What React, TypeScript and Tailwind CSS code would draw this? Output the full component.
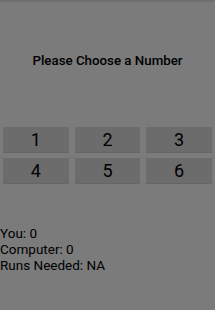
export default function App() {
  const nums = [1, 2, 3, 4, 5, 6];

  return (
    <div className="h-[310px] w-[215px] bg-[#7b7b7b] font-['Roboto',sans-serif] text-black">
      <div className="h-[2px] bg-[#6f6f6f]" />
      <div className="pt-[51px] text-center text-[13.3px] leading-[16px] font-medium">
        Please Choose a Number
      </div>

      <div className="mt-[58px] grid grid-cols-3 gap-x-[6px] gap-y-[5px] px-[3px]">
        {nums.map((n) => (
          <button
            key={n}
            className="h-[26px] bg-[#6c6c6c] text-[18px] leading-none text-black border-b border-[#666]"
          >
            {n}
          </button>
        ))}
      </div>

      <div className="mt-[41px] text-[13.5px] leading-[16px]">
        <div>You: 0</div>
        <div>Computer: 0</div>
        <div>Runs Needed: NA</div>
      </div>
    </div>
  );
}
